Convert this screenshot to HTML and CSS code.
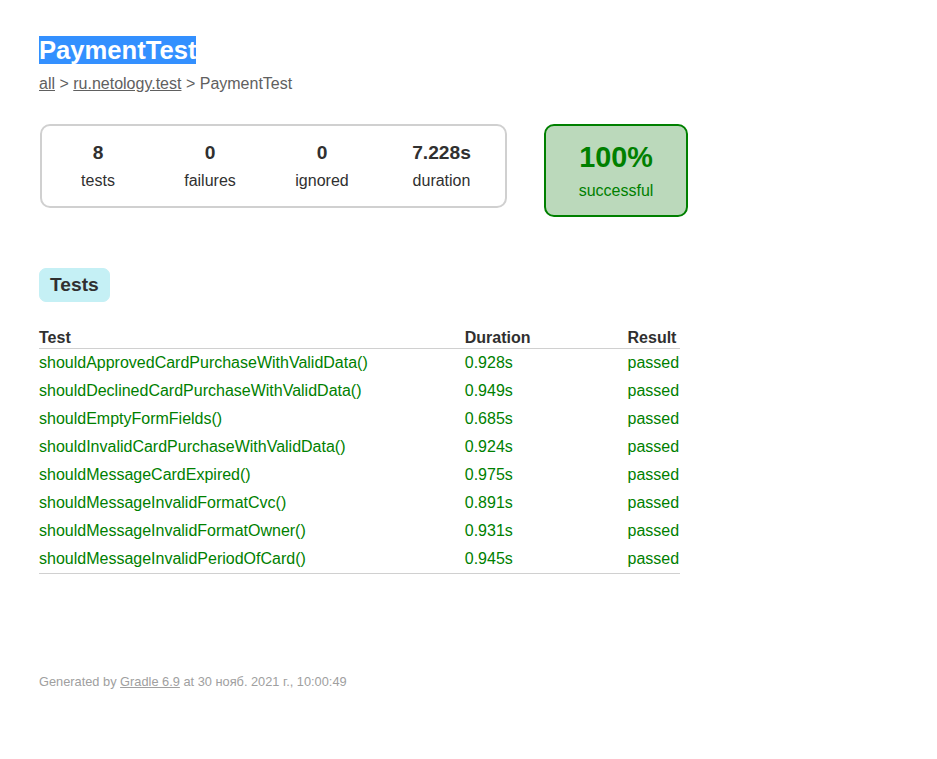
FILE: index.html
```html
<!DOCTYPE html>
<html>
<head>
<meta charset="utf-8">
<title>Test results - Class PaymentTest</title>
<link rel="stylesheet" href="styles.css">
</head>
<body>
<div class="content">
<h1><span class="selection">PaymentTest</span></h1>
<div class="breadcrumbs">
<a href="#">all</a> &gt;
<a href="#">ru.netology.test</a> &gt; PaymentTest</div>
<div class="summary">
<div class="summary-group">
<div class="info-box">
<div class="counter">8</div>
<p>tests</p>
</div>
<div class="info-box">
<div class="counter">0</div>
<p>failures</p>
</div>
<div class="info-box">
<div class="counter">0</div>
<p>ignored</p>
</div>
<div class="info-box duration">
<div class="counter">7.228s</div>
<p>duration</p>
</div>
</div>
<div class="info-box success-rate">
<div class="percent">100%</div>
<p>successful</p>
</div>
</div>
<div class="tabs">
<ul class="tab-links">
<li class="selected"><a href="#tab0">Tests</a></li>
</ul>
<div class="tab">
<table>
<thead>
<tr>
<th>Test</th>
<th>Duration</th>
<th>Result</th>
</tr>
</thead>
<tbody>
<tr><td class="success">shouldApprovedCardPurchaseWithValidData()</td><td class="success">0.928s</td><td class="success">passed</td></tr>
<tr><td class="success">shouldDeclinedCardPurchaseWithValidData()</td><td class="success">0.949s</td><td class="success">passed</td></tr>
<tr><td class="success">shouldEmptyFormFields()</td><td class="success">0.685s</td><td class="success">passed</td></tr>
<tr><td class="success">shouldInvalidCardPurchaseWithValidData()</td><td class="success">0.924s</td><td class="success">passed</td></tr>
<tr><td class="success">shouldMessageCardExpired()</td><td class="success">0.975s</td><td class="success">passed</td></tr>
<tr><td class="success">shouldMessageInvalidFormatCvc()</td><td class="success">0.891s</td><td class="success">passed</td></tr>
<tr><td class="success">shouldMessageInvalidFormatOwner()</td><td class="success">0.931s</td><td class="success">passed</td></tr>
<tr><td class="success">shouldMessageInvalidPeriodOfCard()</td><td class="success">0.945s</td><td class="success">passed</td></tr>
</tbody>
</table>
</div>
</div>
<div class="footer">
<p>Generated by <a href="#">Gradle 6.9</a> at 30 нояб. 2021 г., 10:00:49</p>
</div>
</div>
</body>
</html>
```
FILE: styles.css
```css
body {
  margin: 0;
  padding: 0;
  font-family: "Liberation Sans", Arial, sans-serif;
  font-size: 16px;
  color: #303030;
  background: #ffffff;
}

a, a:visited {
  color: #303030;
}

.content {
  padding: 36px 50px 30px 39px;
}

h1 {
  font-size: 25.6px;
  margin: 0 0 10px 0;
  white-space: nowrap;
}

.selection {
  background: #3390ff;
  color: #ffffff;
}

.breadcrumbs, .breadcrumbs a {
  color: #606060;
}

.summary {
  display: flex;
  align-items: flex-start;
  margin-top: 30px;
  margin-bottom: 40px;
  padding: 1px 0;
}

.summary-group {
  display: flex;
  margin-left: 1px;
  border: solid 2px #d0d0d0;
  border-radius: 10px;
  gap: 2px;
  padding: 1px;
}

.info-box {
  width: 110px;
  padding-top: 15px;
  padding-bottom: 15px;
  text-align: center;
}

.info-box p {
  margin: 0;
}

.counter, .percent {
  font-size: 19.2px;
  font-weight: bold;
  margin-bottom: 8px;
}

.duration {
  width: 125px;
}

.success-rate {
  width: 140px;
  margin-left: 37px;
  border: solid 2px #008000;
  border-radius: 10px;
  background-color: #bbd9bb;
  color: #008000;
}

.success-rate .percent {
  font-size: 28.8px;
}

.success {
  color: #008000;
}

.tab-links {
  display: flex;
  padding: 10px 0;
  margin: 16px 0;
}

.tab-links li {
  list-style: none;
  padding: 5px 10px;
  border-radius: 7px;
  border: solid 1px #d4d4d4;
  background-color: #f0f0f0;
}

.tab-links li.selected {
  background-color: #c5f0f5;
  border-color: #c5f0f5;
}

.tab-links a {
  font-size: 19.2px;
  font-weight: bold;
  display: block;
  text-decoration: none;
  color: #303030;
}

.tab table {
  border-collapse: collapse;
  border-bottom: solid #d0d0d0 1px;
}

.tab th {
  text-align: left;
  white-space: nowrap;
  padding: 1px 1px 1px 6em;
  border-bottom: solid #d0d0d0 1px;
}

.tab td {
  white-space: nowrap;
  padding: 5px 1px 5px 6em;
}

.tab th:first-child, .tab td:first-child {
  padding-left: 0;
}

.footer {
  margin-top: 100px;
  font-size: 12.8px;
  white-space: nowrap;
}

.footer p {
  margin: 0;
}

.footer, .footer a {
  color: #a0a0a0;
}
```
